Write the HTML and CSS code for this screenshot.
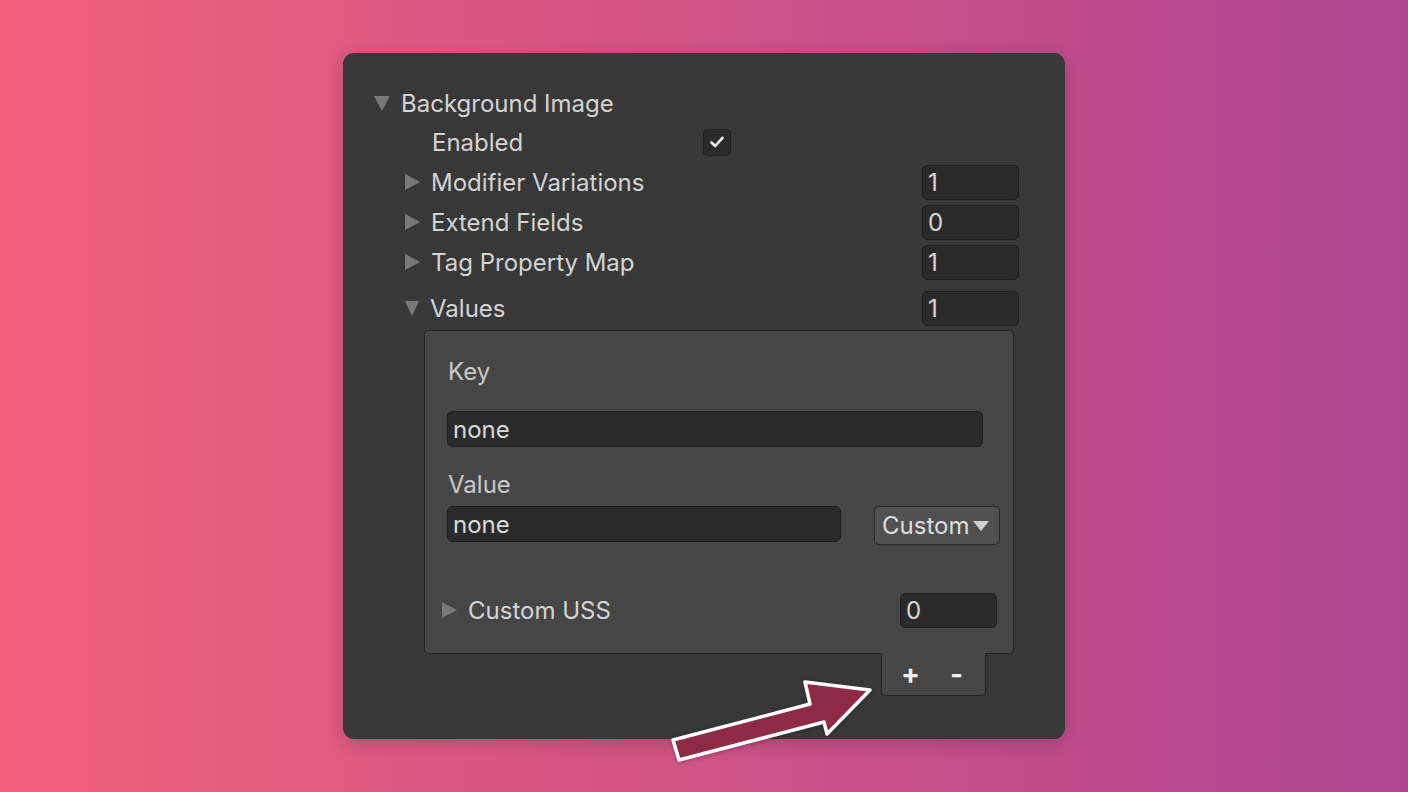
FILE: index.html
```html
<!DOCTYPE html>
<html lang="en">
<head>
  <meta charset="UTF-8">
  <meta name="viewport" content="width=device-width, initial-scale=1">
  <title>Background Image Inspector</title>
  <link rel="stylesheet" href="styles.css">
</head>
<body>
  <div class="panel">
    <!-- Foldout header -->
    <div class="row header">
      <span class="tri down"></span>
      <span class="label">Background Image</span>
    </div>

    <div class="children">
      <div class="row">
        <span class="label plain enabled-label">Enabled</span>
        <span class="checkbox">
          <svg width="18" height="18" viewBox="0 0 18 18">
            <path d="M3.5 9.5 L7.2 13 L14.5 4.8" fill="none" stroke="#f2f2f2" stroke-width="2.6" stroke-linecap="round" stroke-linejoin="round"/>
          </svg>
        </span>
      </div>
      <div class="row">
        <span class="tri right"></span>
        <span class="label">Modifier Variations</span>
        <span class="num">1</span>
      </div>
      <div class="row">
        <span class="tri right"></span>
        <span class="label">Extend Fields</span>
        <span class="num">0</span>
      </div>
      <div class="row">
        <span class="tri right"></span>
        <span class="label">Tag Property Map</span>
        <span class="num">1</span>
      </div>
      <div class="row values">
        <span class="tri down small"></span>
        <span class="label">Values</span>
        <span class="num">1</span>
      </div>

      <!-- List element + add/remove footer -->
      <div class="list">
        <div class="box">
          <div class="box-label key-label">Key</div>
          <div class="text-field key-field">none</div>
          <div class="box-label value-label">Value</div>
          <div class="value-row">
            <div class="text-field value-field">none</div>
            <div class="dropdown">Custom<span class="caret"></span></div>
          </div>
          <div class="row uss-row">
            <span class="tri right"></span>
            <span class="label">Custom USS</span>
            <span class="num">0</span>
          </div>
        </div>
        <div class="tab">
          <span>+</span>
          <span>-</span>
        </div>
      </div>
    </div>

    <svg class="arrow" width="230" height="100" viewBox="0 0 230 100">
      <polygon points="13,70 150,34 145,12 210,20 167,64 164,52 19,90" fill="#8e2946" stroke="#ffffff" stroke-width="3.5" stroke-linejoin="round"/>
    </svg>
  </div>
</body>
</html>
```

FILE: styles.css
```css
body {
  margin: 0;
  height: 100vh;
  display: flex;
  align-items: center;
  justify-content: center;
  background: linear-gradient(90deg, #f1617a, #ae4591);
  font-family: 'Inter', 'Noto Sans', sans-serif;
  color: #d4d4d4;
}

.panel {
  position: relative;
  box-sizing: border-box;
  width: 722px;
  height: 686px;
  padding: 31px 46px 0 30px;
  background-color: #383838;
  border-radius: 11px;
  box-shadow: 0 4px 18px rgba(0, 0, 0, 0.18);
}

.row {
  display: flex;
  align-items: center;
  height: 40px;
  font-size: 24px;
}

.row.header {
  height: 38px;
}

.label {
  margin-left: 11px;
  white-space: nowrap;
}

.label.plain {
  margin-left: 28px;
}

.enabled-label {
  width: 271px;
}

/* Foldout triangles */
.tri {
  width: 0;
  height: 0;
  flex-shrink: 0;
}

.tri.down {
  border-left: 8.5px solid transparent;
  border-right: 8.5px solid transparent;
  border-top: 15px solid #787878;
  margin-left: 1px;
}

.tri.down.small {
  border-left-width: 7.5px;
  border-right-width: 7.5px;
  border-top-width: 15px;
}

.tri.right {
  border-top: 8.5px solid transparent;
  border-bottom: 8.5px solid transparent;
  border-left: 15px solid #787878;
  margin-left: 1px;
}

.children {
  padding-left: 31px;
}

.row.values {
  height: 44px;
  margin-top: 4px;
}

.checkbox {
  box-sizing: border-box;
  width: 28px;
  height: 27px;
  display: flex;
  align-items: center;
  justify-content: center;
  background-color: #2b2b2b;
  border: 1px solid #202020;
  border-radius: 4px;
}

.num {
  box-sizing: border-box;
  margin-left: auto;
  width: 97px;
  height: 35px;
  padding-left: 5px;
  line-height: 34px;
  background-color: #2a2a2a;
  border: 1px solid #1e1e1e;
  border-radius: 5px;
  color: #d8d8d8;
}

/* List element box */
.list {
  margin-left: 20px;
}

.box {
  box-sizing: border-box;
  width: 590px;
  height: 324px;
  padding-left: 22px;
  background-color: #464646;
  border: 1px solid #232323;
  border-radius: 5px;
  position: relative;
}

.box-label {
  font-size: 24px;
  line-height: 30px;
  color: #c9c9c9;
  padding-left: 1px;
}

.key-label {
  margin-top: 26px;
}

.value-label {
  margin-top: 23px;
}

.text-field {
  box-sizing: border-box;
  height: 36px;
  padding-left: 5px;
  font-size: 24px;
  line-height: 35px;
  background-color: #2a2a2a;
  border: 1px solid #1f1f1f;
  border-radius: 5px;
  color: #dadada;
}

.key-field {
  width: 536px;
  margin-top: 24px;
}

.value-row {
  display: flex;
  align-items: flex-start;
  margin-top: 6px;
}

.value-field {
  width: 394px;
}

.dropdown {
  box-sizing: border-box;
  display: flex;
  align-items: center;
  width: 126px;
  height: 39px;
  margin-left: 33px;
  padding-left: 7px;
  font-size: 24px;
  background-color: #515151;
  border: 1px solid #2a2a2a;
  border-radius: 5px;
  color: #dedede;
}

.caret {
  margin-left: 4px;
  width: 0;
  height: 0;
  border-left: 8px solid transparent;
  border-right: 8px solid transparent;
  border-top: 10px solid #d0d0d0;
}

.uss-row {
  margin-top: 45px;
  margin-left: -6px;
  margin-right: 16px;
}

/* Add / remove footer */
.tab {
  box-sizing: border-box;
  display: flex;
  align-items: center;
  gap: 30px;
  width: 105px;
  height: 43px;
  margin-top: -1px;
  margin-left: 457px;
  padding-left: 19px;
  background-color: #464646;
  border: 1px solid #232323;
  border-top: none;
  border-radius: 0 0 5px 5px;
  position: relative;
  font-size: 28px;
  font-weight: 700;
  color: #ececec;
}

.arrow {
  position: absolute;
  left: 317px;
  top: 617px;
  filter: drop-shadow(0 1px 2px rgba(0, 0, 0, 0.25));
}
```
